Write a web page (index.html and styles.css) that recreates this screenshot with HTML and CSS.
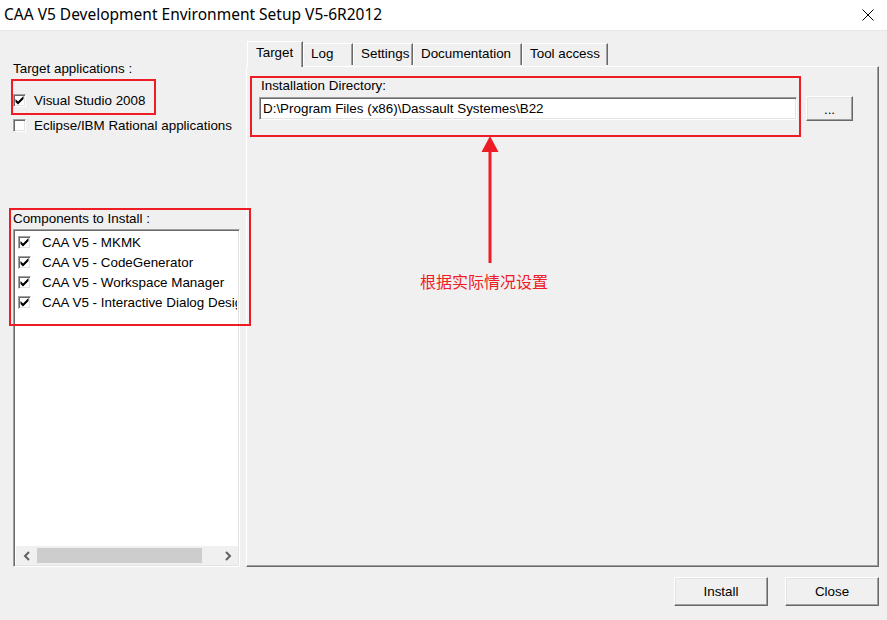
FILE: index.html
```html
<!DOCTYPE html>
<html lang="en">
<head>
<meta charset="utf-8">
<title>CAA V5 Development Environment Setup</title>
<link rel="stylesheet" href="styles.css">
</head>
<body>
<div class="window">
  <header class="titlebar">
    <span class="title">CAA V5 Development Environment Setup V5-6R2012</span>
    <svg class="close" width="12" height="12" viewBox="0 0 12 12"><path d="M0.5 0.5 L11.5 11.5 M11.5 0.5 L0.5 11.5" stroke="#000" stroke-width="1"/></svg>
  </header>
  <div class="content">
    <div class="main">
      <aside class="left">
        <div class="label first">Target applications :</div>
        <label class="check"><span class="box checked"></span><span>Visual Studio 2008</span></label>
        <label class="check"><span class="box"></span><span>Eclipse/IBM Rational applications</span></label>
        <div class="label comp">Components to Install :</div>
        <div class="listbox">
          <div class="items">
            <div class="item"><span class="box checked"></span><span>CAA V5 - MKMK</span></div>
            <div class="item"><span class="box checked"></span><span>CAA V5 - CodeGenerator</span></div>
            <div class="item"><span class="box checked"></span><span>CAA V5 - Workspace Manager</span></div>
            <div class="item"><span class="box checked"></span><span>CAA V5 - Interactive Dialog Designer</span></div>
          </div>
          <div class="hscroll">
            <span class="arrow">
              <svg width="8" height="10" viewBox="0 0 8 10"><path d="M6 1 L2 5 L6 9" fill="none" stroke="#606060" stroke-width="2"/></svg>
            </span>
            <div class="track"><div class="thumb"></div></div>
            <span class="arrow">
              <svg width="8" height="10" viewBox="0 0 8 10"><path d="M2 1 L6 5 L2 9" fill="none" stroke="#606060" stroke-width="2"/></svg>
            </span>
          </div>
        </div>
      </aside>
      <section class="tabs">
        <nav class="tabbar">
          <span class="tab active w-target">Target</span>
          <span class="tab w-log">Log</span>
          <span class="tab w-settings">Settings</span>
          <span class="tab w-doc">Documentation</span>
          <span class="tab w-tool">Tool access</span>
        </nav>
        <div class="panel">
          <div class="field-label">Installation Directory:</div>
          <div class="field-row">
            <div class="input">D:\Program Files (x86)\Dassault Systemes\B22</div>
            <button class="btn small">...</button>
          </div>
        </div>
      </section>
    </div>
    <footer class="buttons">
      <button class="btn wide">Install</button>
      <button class="btn wide">Close</button>
    </footer>
  </div>

  <div class="annot box-vs"></div>
  <div class="annot box-comp"></div>
  <div class="annot box-dir"></div>
  <svg class="arrow-annot" width="20" height="128" viewBox="0 0 20 128">
    <path d="M10 0 L18.5 16 L1.5 16 Z" fill="#ee1c25"/>
    <rect x="8.5" y="14" width="3" height="113" fill="#ee1c25"/>
  </svg>
  <div class="note">根据实际情况设置</div>
</div>
</body>
</html>
```

FILE: styles.css
```css
* { box-sizing: border-box; }
html, body { margin: 0; padding: 0; }
body {
  width: 887px;
  height: 620px;
  overflow: hidden;
  background: #f0f0f0;
  font-family: "Liberation Sans", Arial, sans-serif;
  font-size: 13.4px;
  color: #000;
}
.window { position: relative; width: 887px; height: 620px; }

.titlebar {
  height: 31px;
  background: #fff;
  border-bottom: 1px solid #e8e8e8;
  display: flex;
  align-items: center;
  justify-content: space-between;
  padding: 0 13px 2px 4px;
}
.title {
  font-family: "Noto Sans", "Noto Sans CJK SC", sans-serif;
  font-size: 15.5px;
  color: #000;
}
.close { margin-top: 2px; }

.content { display: flex; flex-direction: column; }
.main { display: flex; height: 536px; }

.left { width: 246px; padding-left: 13px; display: flex; flex-direction: column; }
.label { line-height: 15px; white-space: nowrap; }
.label.first { margin-top: 30px; }
.label.comp { margin-top: 79px; }

.check { display: flex; align-items: center; height: 13px; gap: 8px; white-space: nowrap; }
.check:nth-of-type(1) { margin-top: 18px; }
.check + .check { margin-top: 12px; }

.box {
  width: 13px; height: 13px; flex: none;
  background-color: #fff;
  border: 1px solid;
  border-color: #a0a0a0 #fff #fff #a0a0a0;
  box-shadow: inset 1px 1px 0 #696969, inset -1px -1px 0 #e3e3e3;
}
.box.checked {
  background-image: url("data:image/svg+xml;utf8,<svg xmlns='http://www.w3.org/2000/svg' width='13' height='13' viewBox='0 0 13 13'><path d='M2.5 5 L2.5 8 L5 10.5 L10.5 5 L10.5 2 L5 7.5 Z' fill='black'/></svg>");
  background-position: -1px -1px;
  background-repeat: no-repeat;
}

.listbox {
  margin-top: 3px;
  width: 227px;
  height: 338px;
  background: #fff;
  border: 1px solid;
  border-color: #a0a0a0 #fff #fff #a0a0a0;
  box-shadow: inset 1px 1px 0 #696969, inset -1px -1px 0 #e3e3e3;
  padding: 2px;
  display: flex;
  flex-direction: column;
  overflow: hidden;
}
.items { flex: 1; padding: 0 0 0 2px; overflow: hidden; }
.item { display: flex; align-items: center; height: 20px; gap: 11px; white-space: nowrap; }

.hscroll {
  height: 19px;
  display: flex;
  align-items: stretch;
  background: #f0f0f0;
  margin: 0 -1px -1px 0;
}
.hscroll .arrow { width: 21px; display: flex; align-items: center; justify-content: center; }
.track { flex: 1; display: flex; align-items: center; padding: 2px 0; }
.thumb { width: 165px; height: 100%; background: #cdcdcd; }

.tabs { flex: 1; display: flex; flex-direction: column; padding-top: 9px; padding-right: 8px; }
.tabbar { display: flex; align-items: flex-end; padding-left: 1px; height: 26px; position: relative; z-index: 1; }
.tab {
  height: 22px;
  line-height: 20px;
  padding-left: 7px;
  border: 1px solid;
  border-color: #fff #696969 transparent #fff;
  box-shadow: inset -1px 0 0 #a0a0a0;
  border-bottom: none;
  white-space: nowrap;
  margin-bottom: 1px;
}
.tab.active {
  height: 26px;
  line-height: 22px;
  padding-left: 8px;
  background: #f0f0f0;
  margin-bottom: -1px;
}
.w-target { width: 56px; }
.w-log { width: 50px; }
.w-settings { width: 60px; }
.w-doc { width: 109px; }
.w-tool { width: 86px; }

.panel {
  height: 501px;
  border: 1px solid;
  border-color: #fff #696969 #696969 #fff;
  box-shadow: inset -1px -1px 0 #a0a0a0;
  padding: 11px 0 0 12px;
}
.field-label { line-height: 15px; margin-left: 2px; }
.field-row { display: flex; align-items: center; margin-top: 3px; }
.input {
  width: 538px;
  height: 23px;
  background: #fff;
  border: 1px solid;
  border-color: #a0a0a0 #fff #fff #a0a0a0;
  box-shadow: inset 1px 1px 0 #696969, inset -1px -1px 0 #e3e3e3;
  padding: 3px 0 0 3px;
  line-height: 16px;
  white-space: nowrap;
}

.btn {
  font-family: "Liberation Sans", Arial, sans-serif;
  font-size: 13.4px;
  color: #000;
  background: #f0f0f0;
  border: 1px solid;
  border-color: #fff #696969 #696969 #fff;
  box-shadow: inset -1px -1px 0 #a0a0a0, inset 1px 1px 0 #e3e3e3;
  padding: 0;
  border-radius: 0;
}
.btn.small { width: 47px; height: 25px; margin-left: 9px; line-height: 10px; padding-top: 2px; }
.btn.wide { width: 94px; height: 29px; }

.buttons { display: flex; justify-content: flex-end; gap: 17px; padding: 10px 8px 0 0; }

.annot { position: absolute; border: 2px solid #ee1c25; }
.box-vs { left: 11px; top: 79px; width: 145px; height: 36px; }
.box-comp { left: 9px; top: 208px; width: 242px; height: 118px; }
.box-dir { left: 250px; top: 76px; width: 551px; height: 61px; }
.arrow-annot { position: absolute; left: 480px; top: 136px; }
.note {
  position: absolute;
  left: 420px; top: 270px;
  font-family: "Noto Sans CJK SC", sans-serif;
  font-size: 16px;
  color: #ee1c25;
  line-height: 22px;
}
```
